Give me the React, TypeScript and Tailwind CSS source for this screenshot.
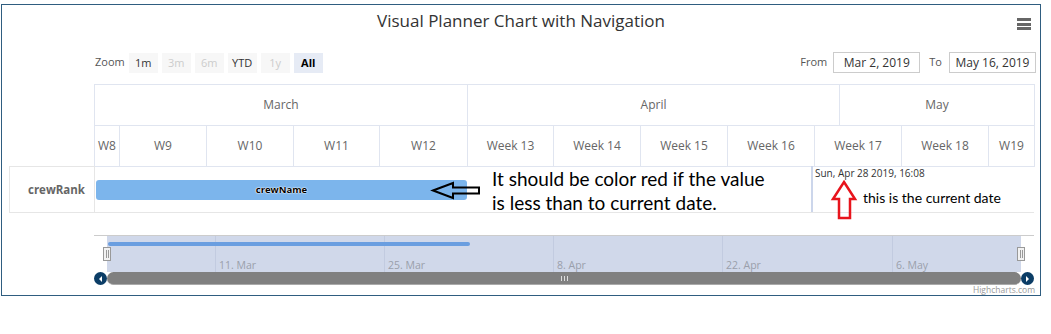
const months = [
  { label: "March", w: "w-[373px]" },
  { label: "April", w: "w-[372px]" },
  { label: "May", w: "w-[195px]" },
];

const weeks = [
  { label: "W8", w: "w-[25px]" },
  { label: "W9", w: "w-[87px]" },
  { label: "W10", w: "w-[87px]" },
  { label: "W11", w: "w-[86px]" },
  { label: "W12", w: "w-[88px]" },
  { label: "Week 13", w: "w-[86px]" },
  { label: "Week 14", w: "w-[87px]" },
  { label: "Week 15", w: "w-[87px]" },
  { label: "Week 16", w: "w-[87px]" },
  { label: "Week 17", w: "w-[87px]" },
  { label: "Week 18", w: "w-[87px]" },
  { label: "W19", w: "w-[46px]" },
];

const ranges = [
  { label: "1m", state: "normal" },
  { label: "3m", state: "disabled" },
  { label: "6m", state: "disabled" },
  { label: "YTD", state: "normal" },
  { label: "1y", state: "disabled" },
  { label: "All", state: "selected" },
];

const navTicks = [
  { label: "11. Mar", w: "w-[169px]" },
  { label: "25. Mar", w: "w-[169px]" },
  { label: "8. Apr", w: "w-[169px]" },
  { label: "22. Apr", w: "w-[170px]" },
  { label: "6. May", w: "w-[129px]" },
];

const Handle = ({ pos }: { pos: string }) => (
  <div
    className={`absolute top-[11px] ${pos} flex h-[14px] w-[8px] items-center justify-center gap-[1px] border border-[#999] bg-[#f2f2f2]`}
  >
    <span className="h-[8px] w-px bg-[#999]" />
    <span className="h-[8px] w-px bg-[#999]" />
  </div>
);

const App: React.FC = () => {
  return (
    <div className="h-[334px] w-[1051px] bg-white pt-[4px] pl-[1px] font-['Open_Sans',sans-serif]">
      <div className="relative flex h-[292px] w-[1040px] flex-col border border-[#2f5d80] bg-white">
        {/* title */}
        <div className="flex h-[40px] justify-center pt-[4px] text-[17px] leading-[24px] text-[#333]">
          Visual Planner Chart with Navigation
        </div>
        <div className="absolute left-[1015px] top-[13px] flex w-[14px] flex-col gap-[1.5px]">
          <span className="h-[3px] bg-[#666]" />
          <span className="h-[3px] bg-[#666]" />
          <span className="h-[3px] bg-[#666]" />
        </div>

        {/* range selector */}
        <div className="mt-[7px] flex h-[21px] items-end pl-[93px] pr-[4px] text-[11px] text-[#555]">
          <span className="mr-[4px] self-center">Zoom</span>
          <div className="flex gap-[4px]">
            {ranges.map((r) => (
              <div
                key={r.label}
                className={
                  r.state === "selected"
                    ? "flex h-[20px] w-[29px] items-center justify-center bg-[#e6ebf5] text-[11px] font-bold text-black"
                    : r.state === "disabled"
                    ? "flex h-[20px] w-[29px] items-center justify-center bg-[#f7f7f7] text-[11px] text-[#ccc]"
                    : "flex h-[20px] w-[29px] items-center justify-center bg-[#f7f7f7] text-[11px] text-[#333]"
                }
              >
                {r.label}
              </div>
            ))}
          </div>
          <div className="ml-auto flex items-center">
            <span className="mr-[6px]">From</span>
            <div className="flex h-[21px] w-[87px] items-center justify-center border border-[#ccc] text-[12px] text-[#333]">
              Mar 2, 2019
            </div>
            <span className="ml-[9px] mr-[7px]">To</span>
            <div className="flex h-[21px] w-[87px] items-center justify-center border border-[#ccc] text-[12px] text-[#333]">
              May 16, 2019
            </div>
          </div>
        </div>

        {/* gantt header */}
        <div className="ml-[92px] mt-[11px] w-[941px] text-[12px] text-[#666]">
          <div className="flex h-[42px] border-y border-l border-[#e0e5f0]">
            {months.map((m) => (
              <div key={m.label} className={`${m.w} flex items-center justify-center border-r border-[#e0e5f0]`}>
                {m.label}
              </div>
            ))}
          </div>
          <div className="flex h-[41px] border-b border-l border-[#e0e5f0]">
            {weeks.map((w) => (
              <div key={w.label} className={`${w.w} flex items-center justify-center border-r border-[#e0e5f0]`}>
                {w.label}
              </div>
            ))}
          </div>
        </div>

        {/* data row */}
        <div className="ml-[7px] mt-[-1px] flex">
          <div className="flex h-[47px] w-[86px] items-center justify-end border border-[#e6e6e6] pr-[9px] text-[11.5px] font-bold text-[#666]">
            crewRank
          </div>
          <div className="relative h-[47px] w-[939px] border-b border-[#e6e6e6] pl-[1px] pt-[14px]">
            <div className="flex h-[20px] w-[371px] items-center justify-center rounded-[3px] bg-[#7cb5ec] text-[9.5px] font-bold text-black [text-shadow:0_0_1px_#fff,0_0_1px_#fff,0_0_2px_#fff]">
              crewName
            </div>
            <div className="absolute left-[716px] top-0 h-[46px] w-[2px] bg-[#ccd6eb]" />
            <div className="absolute left-[720px] top-[1px] text-[10px] leading-[12px] text-[#333]">
              Sun, Apr 28 2019, 16:08
            </div>
          </div>
        </div>

        {/* navigator */}
        <div className="relative ml-[92px] mt-[22px] flex h-[37px] w-[940px] border-t border-[#ccc]">
          <div className="ml-[13px] flex h-[36px] w-[914px] bg-[#d0d8ea]">
            <div className="w-[108px]" />
            {navTicks.map((t) => (
              <div
                key={t.label}
                className={`${t.w} flex items-end border-l border-[#c2cbe0] pl-[3px] text-[10.5px] leading-[13px] text-[#9a9fab]`}
              >
                {t.label}
              </div>
            ))}
          </div>
          <div className="absolute left-[14px] top-[6px] h-[4px] w-[362px] rounded-full bg-[#6a9ee0]" />
          <Handle pos="left-[9px]" />
          <Handle pos="left-[923px]" />
        </div>

        {/* scrollbar */}
        <div className="ml-[92px] flex h-[13px] w-[940px]">
          <div className="flex h-[13px] w-[13px] items-center justify-center rounded-full bg-[#0b3d66]">
            <span className="h-0 w-0 border-y-[3px] border-r-[3px] border-y-transparent border-r-white" />
          </div>
          <div className="flex h-[13px] w-[914px] items-center justify-center gap-[2px] rounded-full border-b border-[#aaa] bg-[#808080]">
            <span className="h-[5px] w-px bg-[#ddd]" />
            <span className="h-[5px] w-px bg-[#ddd]" />
            <span className="h-[5px] w-px bg-[#ddd]" />
          </div>
          <div className="flex h-[13px] w-[13px] items-center justify-center rounded-full bg-[#0b3d66]">
            <span className="h-0 w-0 border-y-[3px] border-l-[3px] border-y-transparent border-l-white" />
          </div>
        </div>

        <div className="pr-[5px] text-right text-[8.5px] leading-[10px] text-[#999]">Highcharts.com</div>

        {/* annotations pasted over the chart */}
        <svg className="absolute left-[426px] top-[175px]" width="54" height="21" viewBox="0 0 54 21">
          <polygon
            points="5,10.5 25,3 25,7.5 51,7.5 51,13.5 25,13.5 25,18"
            fill="none"
            stroke="#000"
            strokeWidth="2"
            strokeLinejoin="miter"
          />
        </svg>
        <div className="absolute left-[490px] top-[162px] font-['Lato',sans-serif] text-[19px] leading-[24px] text-black">
          It should be color red if the value
          <br />
          is less than to current date.
        </div>
        <svg className="absolute left-[828px] top-[174px]" width="28" height="42" viewBox="0 0 28 42">
          <polygon
            points="14,3 25,20 20,20 20,39 9,39 9,20 3,20"
            fill="none"
            stroke="#e8141c"
            strokeWidth="2.5"
          />
        </svg>
        <div className="absolute left-[861px] top-[185px] font-['Lato',sans-serif] text-[14px] leading-[16px] text-black">
          this is the current date
        </div>
      </div>
    </div>
  );
};

export default App;
